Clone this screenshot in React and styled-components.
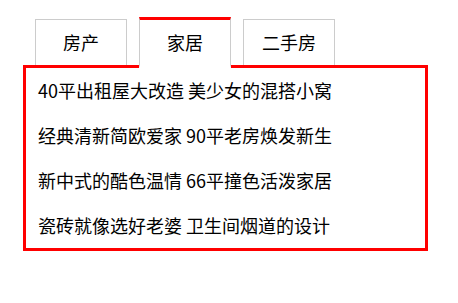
import React, { useState } from 'react';
import styled, { createGlobalStyle } from 'styled-components';

const GlobalStyle = createGlobalStyle`
  html, body {
    margin: 0;
    padding: 0;
    background: #fff;
  }
  body {
    font-family: "Microsoft YaHei", "Noto Sans CJK SC", "Noto Sans", sans-serif;
    color: #000;
  }
`;

const Wrapper = styled.div`
  padding: 17px 0 0 23px;
  width: 405px;
`;

const TabList = styled.ul`
  display: flex;
  align-items: flex-end;
  gap: 12px;
  list-style: none;
  margin: 0;
  padding: 0 0 0 12px;
`;

const Tab = styled.li`
  position: relative;
  box-sizing: border-box;
  width: 92px;
  height: ${props => (props.active ? '51px' : '46px')};
  margin-bottom: ${props => (props.active ? '-3px' : '0')};
  border: 1px solid #ccc;
  border-top: ${props => (props.active ? '3px solid #f00' : '1px solid #ccc')};
  border-bottom: ${props => (props.active ? '3px solid #fff' : 'none')};
  background: #fff;
  z-index: ${props => (props.active ? 1 : 0)};
  font-size: 18px;
  line-height: 45px;
  text-align: center;
  cursor: pointer;
`;

const Panel = styled.ul`
  box-sizing: border-box;
  width: 405px;
  height: 186px;
  margin: 0;
  padding: 0 12px;
  list-style: none;
  border: 3px solid #f00;
`;

const Item = styled.li`
  font-size: 18px;
  line-height: 45px;
  white-space: nowrap;
`;

const tabs = [
  { name: '房产', items: [] },
  {
    name: '家居',
    items: [
      '40平出租屋大改造 美少女的混搭小窝',
      '经典清新简欧爱家 90平老房焕发新生',
      '新中式的酷色温情 66平撞色活泼家居',
      '瓷砖就像选好老婆 卫生间烟道的设计',
    ],
  },
  { name: '二手房', items: [] },
];

const App = () => {
  const [current, setCurrent] = useState(1);
  return (
    <Wrapper>
      <GlobalStyle />
      <TabList>
        {tabs.map((tab, i) => (
          <Tab key={tab.name} active={i === current} onClick={() => setCurrent(i)}>
            {tab.name}
          </Tab>
        ))}
      </TabList>
      <Panel>
        {tabs[current].items.map(text => (
          <Item key={text}>{text}</Item>
        ))}
      </Panel>
    </Wrapper>
  );
};

export default App;
